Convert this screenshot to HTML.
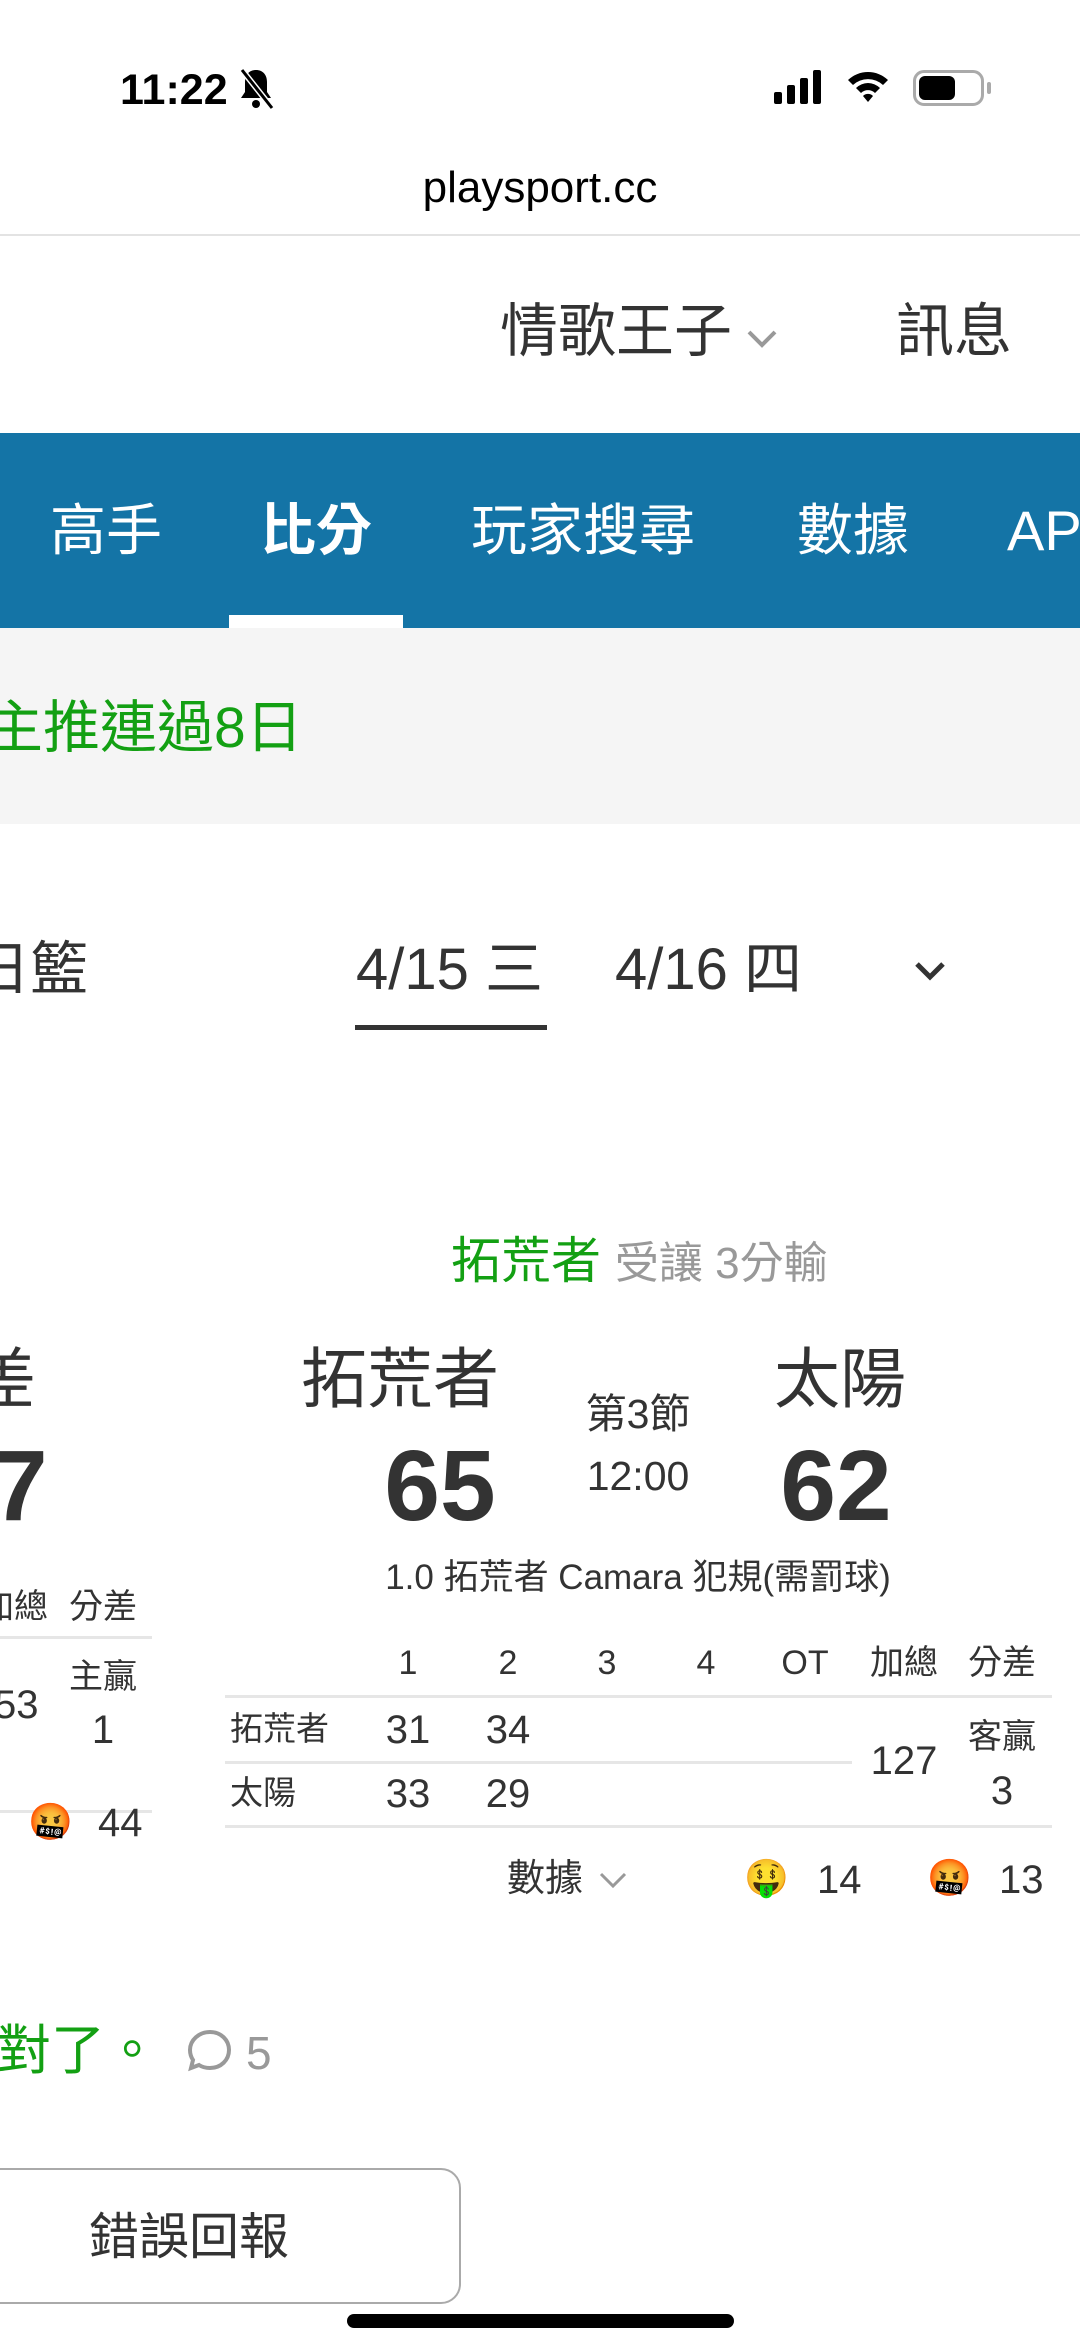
<!DOCTYPE html>
<html><head><meta charset="utf-8"><style>
*{margin:0;padding:0;box-sizing:border-box}
body{width:1080px;height:2348px;background:#fff;position:relative;overflow:hidden;font-family:"Liberation Sans","Noto Sans CJK TC",sans-serif;color:#333}
.a{position:absolute;white-space:nowrap;line-height:1}
.c{transform:translateX(-50%)}
.g{color:#13a013}
.line{position:absolute;height:3px;background:#e6e6e6}
</style></head><body>
<div class="a" style="left:120px;top:69px;font-size:43px;font-weight:bold;color:#000">11:22</div>
<svg class="a" style="left:236px;top:66px" width="40" height="44" viewBox="0 0 40 44"><path d="M20 4c-7 0-11 5-11 12v10l-4 6h30l-4-6V16C31 9 27 4 20 4z" fill="#000"/><circle cx="20" cy="38" r="4" fill="#000"/><path d="M6 4l30 38" stroke="#fff" stroke-width="6"/><path d="M6 4l30 38" stroke="#000" stroke-width="3"/></svg>
<svg class="a" style="left:774px;top:70px" width="54" height="34"><rect x="0" y="22" width="8" height="12" rx="2" fill="#000"/><rect x="13" y="15" width="8" height="19" rx="2" fill="#000"/><rect x="26" y="8" width="8" height="26" rx="2" fill="#000"/><rect x="39" y="0" width="8" height="34" rx="2" fill="#000"/></svg>
<svg class="a" style="left:845px;top:68px" width="46" height="36" viewBox="0 0 46 36"><path d="M3 12a29 29 0 0 1 40 0l-5 5a22 22 0 0 0-30 0z M11 20a17 17 0 0 1 24 0l-5 5a10 10 0 0 0-14 0z M18 28a7 7 0 0 1 10 0l-5 6z" fill="#000"/></svg>
<div class="a" style="left:913px;top:70px;width:71px;height:36px;border:3px solid #aaa;border-radius:11px"></div>
<div class="a" style="left:919px;top:76px;width:36px;height:24px;background:#000;border-radius:6px"></div>
<div class="a" style="left:987px;top:82px;width:4px;height:12px;background:#aaa;border-radius:2px"></div>
<div class="a c" style="left:540px;top:166px;font-size:44px;color:#000">playsport.cc</div>
<div style="position:absolute;left:0;top:234px;width:1080px;height:2px;background:#e3e3e3"></div>
<div class="a" style="left:500px;top:303px;font-size:58px;color:#333">情歌王子</div>
<svg class="a" style="left:746px;top:328px" width="32" height="22"><path d="M3 4l13 13 13-13" stroke="#999" stroke-width="4" fill="none"/></svg>
<div class="a" style="left:896px;top:303px;font-size:58px;color:#333">訊息</div>
<div style="position:absolute;left:0;top:433px;width:1080px;height:195px;background:#1474a6"></div>
<div class="a" style="left:50px;top:503px;font-size:56px;color:#fff">高手</div>
<div class="a" style="left:260px;top:503px;font-size:56px;color:#fff;font-weight:bold">比分</div>
<div class="a" style="left:471px;top:503px;font-size:56px;color:#fff">玩家搜尋</div>
<div class="a" style="left:797px;top:503px;font-size:56px;color:#fff">數據</div>
<div class="a" style="left:1007px;top:503px;font-size:56px;color:#fff">AP</div>
<div style="position:absolute;left:229px;top:615px;width:174px;height:13px;background:#fff"></div>
<div style="position:absolute;left:0;top:628px;width:1080px;height:196px;background:#f5f5f5"></div>
<div class="a g" style="left:-14px;top:700px;font-size:57px">主推連過8日</div>
<div class="a" style="left:-28px;top:941px;font-size:58px;color:#333">日籃</div>
<div class="a" style="left:356px;top:941px;font-size:58px;color:#333">4/15 三</div>
<div style="position:absolute;left:355px;top:1025px;width:192px;height:5px;background:#333"></div>
<div class="a" style="left:615px;top:941px;font-size:58px;color:#333">4/16 四</div>
<svg class="a" style="left:914px;top:960px" width="32" height="22"><path d="M3 4l13 13 13-13" stroke="#333" stroke-width="5" fill="none"/></svg>
<div class="a" style="left:451px;top:1236px;font-size:50px"><span class="g">拓荒者</span> <span style="color:#999;font-size:44px">受讓 3分輸</span></div>
<div class="a" style="left:-30px;top:1346px;font-size:66px;color:#333">差</div>
<div class="a" style="left:-8px;top:1436px;font-size:100px;font-weight:bold;color:#333">7</div>
<div class="a c" style="left:400px;top:1346px;font-size:66px;color:#333">拓荒者</div>
<div class="a c" style="left:840px;top:1346px;font-size:66px;color:#333">太陽</div>
<div class="a c" style="left:440px;top:1436px;font-size:100px;font-weight:bold;color:#333">65</div>
<div class="a c" style="left:836px;top:1436px;font-size:100px;font-weight:bold;color:#333">62</div>
<div class="a c" style="left:638px;top:1394px;font-size:41px;color:#333">第3節</div>
<div class="a c" style="left:638px;top:1456px;font-size:41px;color:#333">12:00</div>
<div class="a c" style="left:638px;top:1560px;font-size:35px;color:#333">1.0 拓荒者 Camara 犯規(需罰球)</div>
<div class="a" style="left:-20px;top:1590px;font-size:34px">加總</div>
<div class="a c" style="left:103px;top:1590px;font-size:34px">分差</div>
<div class="line" style="left:0;top:1636px;width:152px"></div>
<div class="a" style="left:-6px;top:1685px;font-size:40px">53</div>
<div class="a c" style="left:103px;top:1660px;font-size:34px">主贏</div>
<div class="a c" style="left:103px;top:1710px;font-size:40px">1</div>
<div class="line" style="left:0;top:1810px;width:152px"></div>
<div class="a" style="left:28px;top:1804px;font-size:36px">🤬</div>
<div class="a" style="left:98px;top:1803px;font-size:40px">44</div>
<div class="a c" style="left:408px;top:1646px;font-size:34px">1</div>
<div class="a c" style="left:508px;top:1646px;font-size:34px">2</div>
<div class="a c" style="left:607px;top:1646px;font-size:34px">3</div>
<div class="a c" style="left:706px;top:1646px;font-size:34px">4</div>
<div class="a c" style="left:805px;top:1646px;font-size:34px">OT</div>
<div class="a c" style="left:904px;top:1646px;font-size:34px">加總</div>
<div class="a c" style="left:1002px;top:1646px;font-size:34px">分差</div>
<div class="line" style="left:225px;top:1695px;width:827px"></div>
<div class="a" style="left:230px;top:1712px;font-size:33px">拓荒者</div>
<div class="a c" style="left:408px;top:1710px;font-size:40px">31</div>
<div class="a c" style="left:508px;top:1710px;font-size:40px">34</div>
<div class="line" style="left:225px;top:1761px;width:627px"></div>
<div class="a" style="left:230px;top:1776px;font-size:33px">太陽</div>
<div class="a c" style="left:408px;top:1774px;font-size:40px">33</div>
<div class="a c" style="left:508px;top:1774px;font-size:40px">29</div>
<div class="a c" style="left:904px;top:1741px;font-size:40px">127</div>
<div class="a c" style="left:1002px;top:1720px;font-size:34px">客贏</div>
<div class="a c" style="left:1002px;top:1771px;font-size:40px">3</div>
<div class="line" style="left:225px;top:1825px;width:827px"></div>
<div class="a" style="left:507px;top:1860px;font-size:38px">數據</div>
<svg class="a" style="left:598px;top:1870px" width="30" height="20"><path d="M3 4l12 12 12-12" stroke="#999" stroke-width="3" fill="none"/></svg>
<div class="a" style="left:744px;top:1860px;font-size:36px">🤑</div>
<div class="a" style="left:817px;top:1860px;font-size:40px">14</div>
<div class="a" style="left:927px;top:1860px;font-size:36px">🤬</div>
<div class="a" style="left:999px;top:1860px;font-size:40px">13</div>
<div class="a g" style="left:-57px;top:2024px;font-size:54px">就對了。</div>
<svg class="a" style="left:186px;top:2028px" width="48" height="46" viewBox="0 0 48 46"><path d="M24 4c11 0 19 8 19 18s-8 18-19 18c-4 0-8-1-11-3l-8 3 2-8C5 29 4 26 4 22 4 12 13 4 24 4z" stroke="#999" stroke-width="4" fill="none"/></svg>
<div class="a" style="left:246px;top:2030px;font-size:46px;color:#999">5</div>
<div style="position:absolute;left:-30px;top:2168px;width:491px;height:136px;border:2px solid #aaa;border-radius:20px"></div>
<div class="a c" style="left:189px;top:2212px;font-size:50px;color:#333">錯誤回報</div>
<div style="position:absolute;left:347px;top:2314px;width:387px;height:14px;background:#000;border-radius:7px"></div>
</body></html>
